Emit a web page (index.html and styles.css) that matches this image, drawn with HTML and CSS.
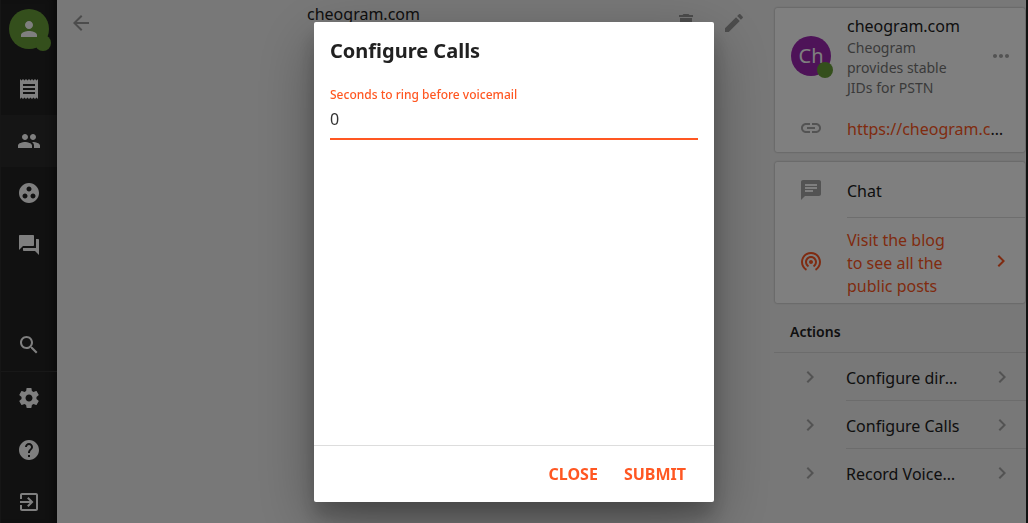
FILE: index.html
```html
<!DOCTYPE html>
<html lang="en">
<head>
<meta charset="utf-8">
<title>Configure Calls</title>
<link rel="stylesheet" href="styles.css">
</head>
<body>
<div class="app">
  <nav class="rail" aria-label="Main">
    <a class="me" href="#" aria-label="Profile">
      <svg class="icon" viewBox="0 0 24 24"><path d="M12 12c2.21 0 4-1.79 4-4s-1.79-4-4-4-4 1.790-4 4 1.790 4 4 4zm0 2c-2.670 0-8 1.340-8 4v2h16v-2c0-2.660-5.330-4-8-4z"/></svg>
      <span class="me-status"></span>
    </a>
    <a class="rail-item" href="#" aria-label="News"><svg class="icon" viewBox="0 0 24 24"><path d="M18 17H6v-2h12v2zm0-4H6v-2h12v2zm0-4H6V7h12v2zM3 22l1.500-1.500L6 22l1.500-1.500L9 22l1.500-1.500L12 22l1.500-1.500L15 22l1.500-1.500L18 22l1.500-1.500L21 22V2l-1.500 1.500L18 2l-1.500 1.500L15 2l-1.500 1.500L12 2l-1.500 1.500L9 2 7.500 3.500 6 2 4.500 3.500 3 2v20z"/></svg></a>
    <a class="rail-item active" href="#" aria-label="Contacts"><svg class="icon" viewBox="0 0 24 24"><path d="M16 11c1.660 0 2.990-1.340 2.990-3S17.660 5 16 5s-3 1.340-3 3 1.340 3 3 3zm-8 0c1.660 0 2.990-1.340 2.990-3S9.660 5 8 5 5 6.340 5 8s1.340 3 3 3zm0 2c-2.330 0-7 1.170-7 3.500V19h14v-2.500C15 14.170 10.330 13 8 13zm8 0c-.29 0-.62.02-.97.05 1.160.84 1.970 1.970 1.970 3.450V19h6v-2.500c0-2.330-4.670-3.500-7-3.500z"/></svg></a>
    <a class="rail-item" href="#" aria-label="Communities"><svg class="icon" viewBox="0 0 24 24"><path d="M12 2C6.480 2 2 6.480 2 12s4.480 10 10 10 10-4.480 10-10S17.520 2 12 2zM8 17.500c-1.380 0-2.500-1.120-2.500-2.500s1.120-2.500 2.500-2.500 2.500 1.120 2.500 2.500-1.120 2.500-2.500 2.500zM9.500 8c0-1.380 1.120-2.500 2.500-2.500s2.500 1.120 2.500 2.500-1.120 2.500-2.500 2.500S9.500 9.380 9.500 8zm6.500 9.500c-1.380 0-2.500-1.120-2.500-2.500s1.120-2.500 2.500-2.500 2.500 1.120 2.500 2.500-1.120 2.500-2.500 2.500z"/></svg></a>
    <a class="rail-item" href="#" aria-label="Chats"><svg class="icon" viewBox="0 0 24 24"><path d="M21 6h-2v9H6v2c0 .55.45 1 1 1h11l4 4V7c0-.55-.45-1-1-1zm-4 6V3c0-.55-.45-1-1-1H3c-.55 0-1 .45-1 1v14l4-4h10c.55 0 1-.45 1-1z"/></svg></a>
    <div class="rail-bottom">
      <a class="rail-item search" href="#" aria-label="Search"><svg class="icon" viewBox="0 0 24 24"><path d="M15.500 14h-.79l-.28-.27C15.410 12.590 16 11.110 16 9.500 16 5.910 13.090 3 9.500 3S3 5.910 3 9.500 5.910 16 9.500 16c1.610 0 3.090-.59 4.230-1.570l.27.28v.79l5 4.990L20.490 19l-4.990-5zm-6 0C7.010 14 5 11.990 5 9.500S7.010 5 9.500 5 14 7.010 14 9.500 11.990 14 9.500 14z"/></svg></a>
      <a class="rail-item" href="#" aria-label="Settings"><svg class="icon" viewBox="0 0 24 24"><path d="M19.430 12.980c.04-.32.07-.64.07-.98s-.03-.66-.07-.98l2.110-1.650c.19-.15.24-.42.12-.64l-2-3.460c-.12-.22-.39-.3-.61-.22l-2.490 1c-.52-.4-1.080-.73-1.690-.98l-.38-2.650C14.460 2.180 14.250 2 14 2h-4c-.25 0-.46.18-.49.42l-.38 2.650c-.61.25-1.170.59-1.690.98l-2.490-1c-.23-.09-.49 0-.61.22l-2 3.460c-.13.22-.07.49.12.64l2.110 1.650c-.04.32-.07.65-.07.98s.03.66.07.98l-2.110 1.650c-.19.15-.24.42-.12.64l2 3.460c.12.22.39.3.61.22l2.490-1c.52.4 1.080.73 1.690.98l.38 2.650c.03.24.24.42.49.42h4c.25 0 .46-.18.49-.42l.38-2.650c.61-.25 1.170-.59 1.690-.98l2.490 1c.23.09.49 0 .61-.22l2-3.460c.12-.22.07-.49-.12-.64l-2.110-1.650zM12 15.500c-1.930 0-3.500-1.570-3.500-3.500s1.570-3.500 3.500-3.500 3.500 1.570 3.500 3.500-1.570 3.500-3.500 3.500z"/></svg></a>
      <a class="rail-item" href="#" aria-label="Help"><svg class="icon" viewBox="0 0 24 24"><path d="M12 2C6.480 2 2 6.480 2 12s4.480 10 10 10 10-4.480 10-10S17.520 2 12 2zm1 17h-2v-2h2v2zm2.070-7.750l-.9.92C13.450 12.900 13 13.500 13 15h-2v-.5c0-1.100.45-2.100 1.170-2.830l1.240-1.260c.37-.36.59-.86.59-1.410 0-1.100-.9-2-2-2s-2 .9-2 2H8c0-2.210 1.790-4 4-4s4 1.790 4 4c0 .88-.36 1.680-.93 2.250z"/></svg></a>
      <a class="rail-item" href="#" aria-label="Log out"><svg class="icon" viewBox="0 0 24 24"><path d="M10.090 15.590L11.500 17l5-5-5-5-1.410 1.410L12.670 11H3v2h9.670l-2.580 2.590zM19 3H5c-1.110 0-2 .9-2 2v4h2V5h14v14H5v-4H3v4c0 1.100.89 2 2 2h14c1.100 0 2-.9 2-2V5c0-1.100-.9-2-2-2z"/></svg></a>
    </div>
  </nav>

  <main class="main">
    <header class="bar">
      <button class="icon-button" aria-label="Back"><svg class="icon" viewBox="0 0 24 24"><path d="M20 11H7.830l5.590-5.590L12 4l-8 8 8 8 1.410-1.410L7.830 13H20v-2z"/></svg></button>
      <p class="bar-title">cheogram.com</p>
      <button class="icon-button" aria-label="Delete"><svg class="icon" viewBox="0 0 24 24"><path d="M6 19c0 1.100.9 2 2 2h8c1.100 0 2-.9 2-2V7H6v12zM19 4h-3.500l-1-1h-5l-1 1H5v2h14V4z"/></svg></button>
      <button class="icon-button" aria-label="Edit"><svg class="icon" viewBox="0 0 24 24"><path d="M3 17.250V21h3.750L17.810 9.940l-3.750-3.750L3 17.250zM20.710 7.040c.39-.39.39-1.020 0-1.410l-2.340-2.340c-.39-.39-1.020-.39-1.410 0l-1.830 1.830 3.750 3.750 1.830-1.830z"/></svg></button>
    </header>
  </main>

  <aside class="side">
    <section class="card">
      <div class="row contact">
        <span class="lead"><span class="avatar">Ch<span class="presence"></span></span></span>
        <div class="text">
          <p>cheogram.com</p>
          <p class="about">Cheogram provides stable JIDs for PSTN</p>
        </div>
        <button class="trail" aria-label="More"><svg class="icon" viewBox="0 0 24 24"><path d="M6 10c-1.100 0-2 .9-2 2s.9 2 2 2 2-.9 2-2-.9-2-2-2zm12 0c-1.100 0-2 .9-2 2s.9 2 2 2 2-.9 2-2-.9-2-2-2zm-6 0c-1.100 0-2 .9-2 2s.9 2 2 2 2-.9 2-2-.9-2-2-2z"/></svg></button>
      </div>
      <div class="row">
        <span class="lead"><svg class="icon" viewBox="0 0 24 24"><path d="M3.900 12c0-1.710 1.390-3.100 3.100-3.100h4V7H7c-2.760 0-5 2.240-5 5s2.240 5 5 5h4v-1.900H7c-1.710 0-3.100-1.390-3.100-3.100zM8 13h8v-2H8v2zm9-6h-4v1.900h4c1.710 0 3.100 1.390 3.100 3.100s-1.390 3.100-3.100 3.100h-4V17h4c2.760 0 5-2.240 5-5s-2.240-5-5-5z"/></svg></span>
        <p class="clip"><a class="link" href="#">https://cheogram.com</a></p>
      </div>
    </section>
    <section class="card services">
      <a class="row chat" href="#">
        <span class="lead"><svg class="icon" viewBox="0 0 24 24"><path d="M20 2H4c-1.100 0-1.990.9-1.990 2L2 22l4-4h14c1.100 0 2-.9 2-2V4c0-1.100-.9-2-2-2zM6 9h12v2H6V9zm8 5H6v-2h8v2zm4-6H6V6h12v2z"/></svg></span>
        <span class="ruled">Chat</span>
      </a>
      <a class="row link blog" href="#">
        <span class="lead"><svg class="icon" viewBox="0 0 24 24"><path d="M12 11c-1.100 0-2 .9-2 2s.9 2 2 2 2-.9 2-2-.9-2-2-2zm6 2c0-3.310-2.690-6-6-6s-6 2.690-6 6c0 2.220 1.210 4.150 3 5.190l1-1.740c-1.190-.7-2-1.970-2-3.450 0-2.210 1.790-4 4-4s4 1.790 4 4c0 1.480-.81 2.750-2 3.450l1 1.740c1.790-1.040 3-2.970 3-5.190zM12 3C6.480 3 2 7.480 2 13c0 3.700 2.010 6.920 4.990 8.650l1-1.730C5.610 18.530 4 15.960 4 13c0-4.420 3.580-8 8-8s8 3.580 8 8c0 2.960-1.610 5.530-4 6.920l1 1.730c2.990-1.730 5-4.950 5-8.650 0-5.520-4.480-10-10-10z"/></svg></span>
        <span class="text">Visit the blog to see all the public posts</span>
        <span class="trail"><svg class="icon" viewBox="0 0 24 24"><path d="M10 6L8.590 7.410 13.170 12l-4.580 4.590L10 18l6-6z"/></svg></span>
      </a>
    </section>
    <section class="actions">
      <h2 class="actions-title">Actions</h2>
      <a class="row action" href="#">
        <span class="lead"><svg class="icon" viewBox="0 0 24 24"><path d="M10 6L8.590 7.410 13.170 12l-4.580 4.590L10 18l6-6z"/></svg></span>
        <span class="action-body"><span class="clip">Configure direct message route</span><span class="trail"><svg class="icon" viewBox="0 0 24 24"><path d="M10 6L8.590 7.410 13.170 12l-4.580 4.590L10 18l6-6z"/></svg></span></span>
      </a>
      <a class="row action" href="#">
        <span class="lead"><svg class="icon" viewBox="0 0 24 24"><path d="M10 6L8.590 7.410 13.170 12l-4.580 4.590L10 18l6-6z"/></svg></span>
        <span class="action-body"><span class="clip">Configure Calls</span><span class="trail"><svg class="icon" viewBox="0 0 24 24"><path d="M10 6L8.590 7.410 13.170 12l-4.580 4.590L10 18l6-6z"/></svg></span></span>
      </a>
      <a class="row action" href="#">
        <span class="lead"><svg class="icon" viewBox="0 0 24 24"><path d="M10 6L8.590 7.410 13.170 12l-4.580 4.590L10 18l6-6z"/></svg></span>
        <span class="action-body"><span class="clip">Record Voicemail Greeting</span><span class="trail"><svg class="icon" viewBox="0 0 24 24"><path d="M10 6L8.590 7.410 13.170 12l-4.580 4.590L10 18l6-6z"/></svg></span></span>
      </a>
    </section>
  </aside>
</div>

<div class="overlay">
  <form class="dialog" role="dialog" aria-labelledby="dialog-title">
    <div class="dialog-body">
      <h1 class="dialog-title" id="dialog-title">Configure Calls</h1>
      <label class="field-label" for="seconds">Seconds to ring before voicemail</label>
      <input class="field-input" id="seconds" type="text" value="0">
    </div>
    <footer class="dialog-footer">
      <button class="flat" type="button">CLOSE</button>
      <button class="flat" type="button">SUBMIT</button>
    </footer>
  </form>
</div>
</body>
</html>
```

FILE: styles.css
```css
* {
  box-sizing: border-box;
}

body {
  margin: 0;
  font-family: "Noto Sans", sans-serif;
  font-size: 16px;
  line-height: 24px;
  color: #212121;
  background: #f0f0f0;
}

p,
h1,
h2 {
  margin: 0;
}

a {
  color: inherit;
  text-decoration: none;
}

button {
  padding: 0;
  border: 0;
  background: none;
  font: inherit;
  color: inherit;
}

.icon {
  display: block;
  width: 24px;
  height: 24px;
  fill: currentColor;
}

.app {
  display: grid;
  grid-template-columns: 57px 1fr 252px;
  height: 100vh;
  overflow: hidden;
  border-right: 2px solid #222;
}

/* Navigation rail */
.rail {
  display: flex;
  flex-direction: column;
  overflow: hidden;
  color: #fff;
  background: #222;
  border-left: 1px solid #2c2c2c;
  box-shadow: inset -8px 0 8px -6px #111;
}

.me {
  position: relative;
  display: grid;
  place-items: center;
  flex: none;
  width: 40px;
  height: 40px;
  margin: 9px 8px 14px;
  border-radius: 50%;
  background: #689f38;
}

.me-status {
  position: absolute;
  right: -2px;
  bottom: -2px;
  width: 16px;
  height: 16px;
  border-radius: 50%;
  background: #689f38;
}

.rail-item {
  display: grid;
  place-items: center;
  flex: none;
  height: 52px;
}

.active {
  background: rgba(255, 255, 255, 0.04);
}

.rail-bottom {
  margin-top: 48px;
}

.search {
  height: 53px;
  border-bottom: 1px solid #303030;
}

/* Header of the main column */
.bar {
  display: flex;
  align-items: flex-start;
}

.icon-button {
  display: grid;
  place-items: center;
  width: 48px;
  height: 46px;
  color: #999;
}

.bar .icon-button:last-child {
  margin-right: 16px;
}

.bar-title {
  flex: 1;
  padding: 2px 40px 0 0;
  text-align: center;
}

/* Contact column */
.card {
  margin: 8px 1px 0;
  background: #fff;
  border-radius: 2px;
  box-shadow: 0 0 2px rgba(0, 0, 0, 0.4);
}

.services {
  margin-top: 10px;
}

.row {
  display: grid;
  grid-template-columns: 72px 1fr 48px;
  align-items: center;
  min-height: 48px;
}

.lead,
.trail {
  display: grid;
  place-items: center;
  color: #a6a6a6;
}

.text {
  padding-right: 16px;
}

.contact {
  min-height: 96px;
}

.about {
  font-size: 14px;
  line-height: 20px;
  color: #757575;
}

.avatar {
  position: relative;
  display: grid;
  place-items: center;
  width: 40px;
  height: 40px;
  border-radius: 50%;
  font-size: 20px;
  color: #fff;
  background: #9c27b0;
}

.presence {
  position: absolute;
  right: -2px;
  bottom: -2px;
  width: 16px;
  height: 16px;
  border-radius: 50%;
  background: #689f38;
}

.clip {
  min-width: 0;
  margin-right: 16px;
  padding-top: 2px;
  overflow: hidden;
  white-space: nowrap;
  text-overflow: ellipsis;
}

.row > .clip {
  grid-column: 2 / 4;
}

.link,
.link .lead,
.link .trail {
  color: #ff5722;
}

.ruled {
  grid-column: 2 / 4;
  padding: 17px 0 14px;
  border-bottom: 1px solid #ddd;
}

.blog {
  line-height: 23px;
}

.blog .text {
  padding-top: 11px;
  padding-bottom: 5px;
}

.actions-title {
  padding: 17px 16px 8px;
  font-size: 14px;
  font-weight: 600;
  border-bottom: 1px solid #d8d8d8;
}

.action {
  grid-template-columns: 72px 1fr;
}

.action-body {
  display: grid;
  grid-template-columns: 1fr 48px;
  align-items: center;
  height: 48px;
  border-bottom: 1px solid #d8d8d8;
}

.action:last-child .action-body {
  border-bottom-color: transparent;
}

/* Dialog */
.overlay {
  position: fixed;
  inset: 0;
  padding: 22px 16px;
  background: rgba(0, 0, 0, 0.5);
}

.dialog {
  display: flex;
  flex-direction: column;
  max-width: 400px;
  min-height: 480px;
  margin: 0 auto;
  background: #fff;
  border-radius: 2px;
  box-shadow: 0 19px 60px rgba(0, 0, 0, 0.3), 0 15px 20px rgba(0, 0, 0, 0.22);
}

.dialog-body {
  flex: 1;
  padding: 17px 16px;
}

.dialog-title {
  margin-bottom: 22px;
  font-size: 20px;
  line-height: 24px;
  font-weight: 700;
}

.field-label {
  display: block;
  font-size: 12px;
  line-height: 20px;
  font-weight: 500;
  color: #ff5722;
}

.field-input {
  display: block;
  width: 100%;
  height: 35px;
  padding: 0 0 5px;
  border: 0;
  border-bottom: 2px solid #ff5722;
  outline: 0;
  font: inherit;
  color: #333;
  background: none;
}

.dialog-footer {
  display: flex;
  justify-content: flex-end;
  gap: 10px;
  padding: 10px 20px;
  border-top: 1px solid #ddd;
}

.flat {
  height: 36px;
  padding: 0 8px;
  font-weight: 700;
  color: #ff5722;
}
```
